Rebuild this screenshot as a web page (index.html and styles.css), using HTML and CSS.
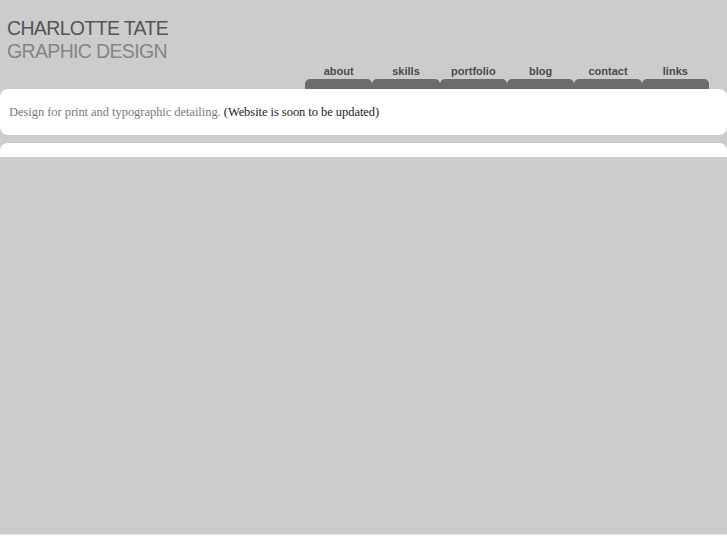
FILE: index.html
```html
<!DOCTYPE html>
<html>
<head>
<meta charset="utf-8">
<link rel="stylesheet" href="styles.css">
</head>
<body>
<div class="page">
  <div class="header">
    <div class="logo">
      <div class="logo-name">CHARLOTTE TATE</div>
      <div class="logo-sub">GRAPHIC DESIGN</div>
    </div>
    <ul class="nav">
      <li class="nav-item"><span class="nav-label">about</span><span class="nav-tab"></span></li>
      <li class="nav-item"><span class="nav-label">skills</span><span class="nav-tab"></span></li>
      <li class="nav-item"><span class="nav-label">portfolio</span><span class="nav-tab"></span></li>
      <li class="nav-item"><span class="nav-label">blog</span><span class="nav-tab"></span></li>
      <li class="nav-item"><span class="nav-label">contact</span><span class="nav-tab"></span></li>
      <li class="nav-item"><span class="nav-label">links</span><span class="nav-tab"></span></li>
    </ul>
  </div>
  <div class="intro">
    <p class="intro-text">Design for print and typographic detailing. <span class="intro-note">(Website is soon to be updated)</span></p>
  </div>
  <div class="content-top"></div>
</div>
</body>
</html>
```
FILE: styles.css
```css
html, body {
  margin: 0;
  padding: 0;
  background: #ffffff;
}
.page {
  background: #cccccc;
  height: 534px;
  border-bottom: 1px solid #e3e3e3;
  overflow: hidden;
}
.header {
  height: 89px;
  display: flex;
  justify-content: space-between;
}
.logo {
  padding: 17px 0 0 7px;
  font-family: "Liberation Sans", Arial, sans-serif;
  font-size: 19.5px;
  letter-spacing: -0.65px;
  line-height: 23px;
}
.logo-name {
  color: #555555;
}
.logo-sub {
  color: #858585;
}
.nav {
  list-style: none;
  margin: 0 18px 0 0;
  padding: 0;
  display: flex;
  align-self: flex-end;
}
.nav-item {
  width: 67.33px;
  display: flex;
  flex-direction: column;
  align-items: center;
}
.nav-label {
  font-family: "Liberation Sans", Arial, sans-serif;
  font-weight: bold;
  font-size: 11px;
  line-height: 14px;
  color: #4a4a4a;
  margin-bottom: 1px;
}
.nav-tab {
  display: block;
  width: 100%;
  height: 10px;
  background: #6c6c6f;
  border-radius: 5px 5px 0 0;
}
.intro {
  background: #ffffff;
  border-radius: 8px;
  height: 46px;
  display: flex;
  align-items: center;
}
.intro-text {
  margin: 0 0 0 9px;
  font-family: "Liberation Serif", "Times New Roman", serif;
  font-size: 12.5px;
  letter-spacing: -0.05px;
  color: #7a7a7a;
}
.intro-note {
  color: #222222;
}
.content-top {
  margin-top: 8px;
  height: 14px;
  background: #ffffff;
  border-radius: 8px 8px 0 0;
}
```
